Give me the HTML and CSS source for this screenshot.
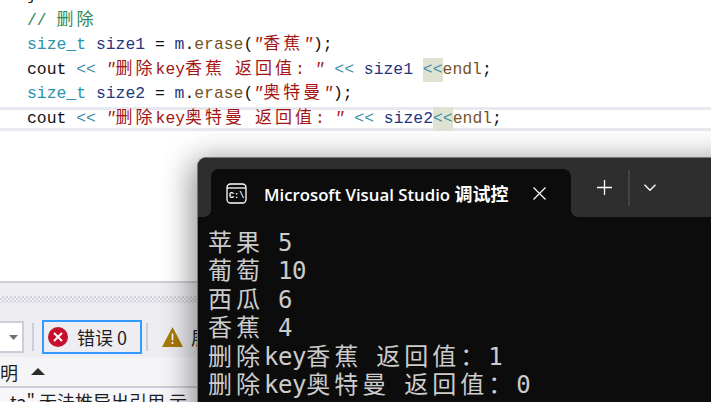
FILE: index.html
```html
<!DOCTYPE html>
<html lang="zh">
<head>
<meta charset="utf-8">
<title>Visual Studio</title>
<link rel="stylesheet" href="styles.css">
</head>
<body>
<main class="desktop">
  <section class="editor">
    <div class="line"><span class="plain">}</span></div>
    <div class="line"><span class="comment">// <span class="hz">删除</span></span></div>
    <div class="line"><span class="type">size_t</span> <span class="var">size1</span> = <span class="var">m</span>.<span class="fn">erase</span>(<span class="str"><i class="q">"</i><span class="hz">香蕉</span><i class="q">"</i></span>);</div>
    <div class="line">cout <span class="op">&lt;&lt;</span> <span class="str"><i class="q">"</i><span class="hz">删除</span>key<span class="hz">香蕉</span> <span class="hz">返回值</span>: <i class="q">"</i></span> <span class="op">&lt;&lt;</span> <span class="var">size1</span> <span class="op mark">&lt;&lt;</span><span class="fn">endl</span>;</div>
    <div class="line"><span class="type">size_t</span> <span class="var">size2</span> = <span class="var">m</span>.<span class="fn">erase</span>(<span class="str"><i class="q">"</i><span class="hz">奥特曼</span><i class="q">"</i></span>);</div>
    <div class="line current">cout <span class="op">&lt;&lt;</span> <span class="str"><i class="q">"</i><span class="hz">删除</span>key<span class="hz">奥特曼</span> <span class="hz">返回值</span>: <i class="q">"</i></span> <span class="op">&lt;&lt;</span> <span class="var">size2</span><span class="op mark">&lt;&lt;</span><span class="fn">endl</span>;</div>
  </section>

  <section class="panel">
    <div class="grip"></div>
    <div class="toolbar">
      <div class="combo"><svg class="caret" viewBox="0 0 9 5"><path d="M0 0h9L4.500 5z"/></svg></div>
      <div class="sep"></div>
      <div class="errors">
        <svg class="status" viewBox="0 0 20 20"><circle cx="10" cy="10" r="10" fill="#c50f2b"/><path d="M6 6l8 8M14 6l-8 8" stroke="#fff" stroke-width="2"/></svg>
        <span>错误 0</span>
      </div>
      <div class="sep"></div>
      <svg class="warn" viewBox="0 0 21 20"><path d="M10.500 0L21 20H0z" fill="#a87a08"/><path d="M10.500 6.500v7M10.500 15v2" stroke="#fff" stroke-width="1.600"/></svg>
      <span class="warn-text">展</span>
    </div>
    <div class="header"><span>说明</span><svg class="sort" viewBox="0 0 14 7"><path d="M7 0l7 7H0z"/></svg></div>
    <div class="row">ta" 无法推导出引用 示</div>
  </section>

  <section class="terminal">
    <div class="tabbar">
      <div class="tab">
        <svg class="cmd" viewBox="0 0 21 21"><rect x="1" y="1" width="19" height="19" rx="3.500" fill="none" stroke="#fff" stroke-width="1.300"/><path d="M1 5h19" stroke="#fff" stroke-width="1.300"/><text x="3" y="15" class="cmd-text">C:\</text></svg>
        <span class="tab-title">Microsoft Visual Studio <span class="tab-cn">调试控</span></span>
        <svg class="close" viewBox="0 0 13 13"><path d="M.5.500l12 12M12.500.500l-12 12" stroke="#fff" stroke-width="1.200"/></svg>
      </div>
      <svg class="plus" viewBox="0 0 15 15"><path d="M7.500 0v15M0 7.500h15" stroke="#fff" stroke-width="1.300"/></svg>
      <div class="tab-sep"></div>
      <svg class="chev" viewBox="0 0 12 7"><path d="M.5.800l5.500 5.500L11.500.800" fill="none" stroke="#fff" stroke-width="1.300"/></svg>
    </div>
    <div class="output">
      <div class="out-line"><span class="cn">苹果</span> 5</div>
      <div class="out-line"><span class="cn">葡萄</span> 10</div>
      <div class="out-line"><span class="cn">西瓜</span> 6</div>
      <div class="out-line"><span class="cn">香蕉</span> 4</div>
      <div class="out-line"><span class="cn">删除</span>key<span class="cn">香蕉</span> <span class="cn">返回值：</span>1</div>
      <div class="out-line"><span class="cn">删除</span>key<span class="cn">奥特曼</span> <span class="cn">返回值：</span>0</div>
    </div>
  </section>
</main>
</body>
</html>
```
FILE: styles.css
```css
* { box-sizing: border-box; }
html, body { margin: 0; height: 100%; }
body { overflow: hidden; background: #fff; }
.desktop { position: relative; width: 711px; height: 402px; overflow: hidden; background: #fff; }

.editor {
  height: 297px;
  padding-left: 27px;
  margin-top: -16px;
  font: 16.400px/24.500px "Liberation Mono", "Noto Sans CJK SC", monospace;
  color: #111;
}
.line { height: 24.500px; white-space: pre; }
.current {
  margin-left: -27px;
  padding-left: 27px;
  box-shadow: inset 0 3px 0 #e8e8f0, inset 0 -3px 0 #e8e8f0;
}
.hz { font-family: "Noto Sans CJK SC", sans-serif; font-size: 17px; line-height: 1; letter-spacing: 3px; font-weight: 400; }
.q { font-style: italic; }
.comment { color: #2e8b57; }
.type { color: #2b91af; }
.var { color: #1f377f; }
.fn { color: #74531f; }
.str { color: #a31515; }
.op { color: #3d8fa8; }
.mark { background: #dfe4d2; display: inline-block; height: 24.500px; }

.panel {
  position: absolute;
  left: 0; top: 281px;
  width: 240px; height: 121px;
  background: #eeeef2;
  border-top: 2px solid #ccced9;
  font-family: "Noto Sans CJK SC", sans-serif;
  color: #1e1e1e;
}
.grip {
  height: 7px;
  margin-top: 13px;
  background: repeating-conic-gradient(#d4d4dc 0 25%, #eeeef2 0 50%) 0 0 / 4px 4px;
}
.toolbar { display: flex; align-items: center; height: 34px; margin-top: 17px; }
.combo {
  width: 24px; height: 32px;
  background: #fff;
  border: 2px solid #cccedb;
  border-left: 0;
  display: flex; align-items: center; justify-content: flex-end;
  padding-right: 4px;
}
.caret { width: 9px; height: 5px; fill: #717171; }
.sep { width: 2px; height: 28px; background: #cccedb; margin: 0 8px; }
.errors {
  display: flex; align-items: center; gap: 9px;
  width: 100px; height: 34px; padding-left: 4px; margin: 0 -4px 0 0;
  border: 2px solid #3399ff;
  font-size: 18px;
  white-space: nowrap;
}
.status { width: 20px; height: 20px; flex: none; }
.warn { width: 21px; height: 20px; flex: none; margin-left: 6px; }
.warn-text { margin-left: 8px; font-size: 18px; }
.header {
  display: flex; align-items: center; gap: 13px;
  height: 31px; margin-top: 3px;
  background: #f5f5f8;
  border-bottom: 2px solid #cccedb;
  font-size: 18px;
  overflow: hidden;
}
.header span { margin-left: -18px; }
.sort { width: 14px; height: 7px; fill: #2b2b2b; }
.row { height: 20px; background: #f7f7f9; padding-left: 10px; font-size: 18px; line-height: 26px; white-space: nowrap; overflow: hidden; }

.terminal {
  position: absolute;
  left: 197px; top: 157px;
  width: 560px; height: 300px;
  background: #0c0c0c;
  border-radius: 9px 0 0 0;
  border: 1px solid #777;
  border-width: 1px 0 0 1px;
  box-shadow: 0 8px 30px 6px rgba(0,0,0,.42);
}
.tabbar {
  display: flex; align-items: center;
  height: 59px;
  padding-left: 13px;
  background: #2e2e2e;
  border-radius: 9px 0 0 0;
}
.tab {
  display: flex; align-items: center;
  align-self: flex-end;
  width: 360px; height: 48px;
  background: #0c0c0c;
  border-radius: 8px 8px 0 0;
  padding-left: 15px;
  color: #fff;
  position: relative;
}
.tab::before, .tab::after {
  content: "";
  position: absolute;
  bottom: 0;
  width: 7px; height: 7px;
}
.tab::before { right: 100%; background: radial-gradient(circle at 0 0, transparent 6.500px, #0c0c0c 7px); }
.tab::after { left: 100%; background: radial-gradient(circle at 100% 0, transparent 6.500px, #0c0c0c 7px); }
.cmd { width: 21px; height: 21px; flex: none; }
.cmd-text { font: bold 8.500px "Liberation Mono", monospace; fill: #fff; }
.tab-title {
  margin-left: 17px;
  width: 246px;
  overflow: hidden;
  white-space: nowrap;
  font: 600 16.800px "Open Sans", "Noto Sans CJK SC", sans-serif;
}
.tab-cn { font-size: 18px; }
.close { width: 13px; height: 13px; margin-left: 23px; flex: none; }
.plus { width: 15px; height: 15px; margin-left: 26px; flex: none; }
.tab-sep { width: 2px; height: 36px; background: #444; margin-left: 16px; }
.chev { width: 12px; height: 7px; margin-left: 14px; flex: none; }
.output {
  padding: 12px 0 0 10px;
  font: 24px/28.400px "DejaVu Sans Mono", "Noto Sans CJK SC", monospace;
  letter-spacing: -.4px;
  color: #cccccc;
}
.out-line { height: 28.400px; white-space: pre; }
.cn { font-family: "Noto Sans CJK SC", sans-serif; font-size: 24px; line-height: 1; letter-spacing: 4px; font-weight: 400; }
```
